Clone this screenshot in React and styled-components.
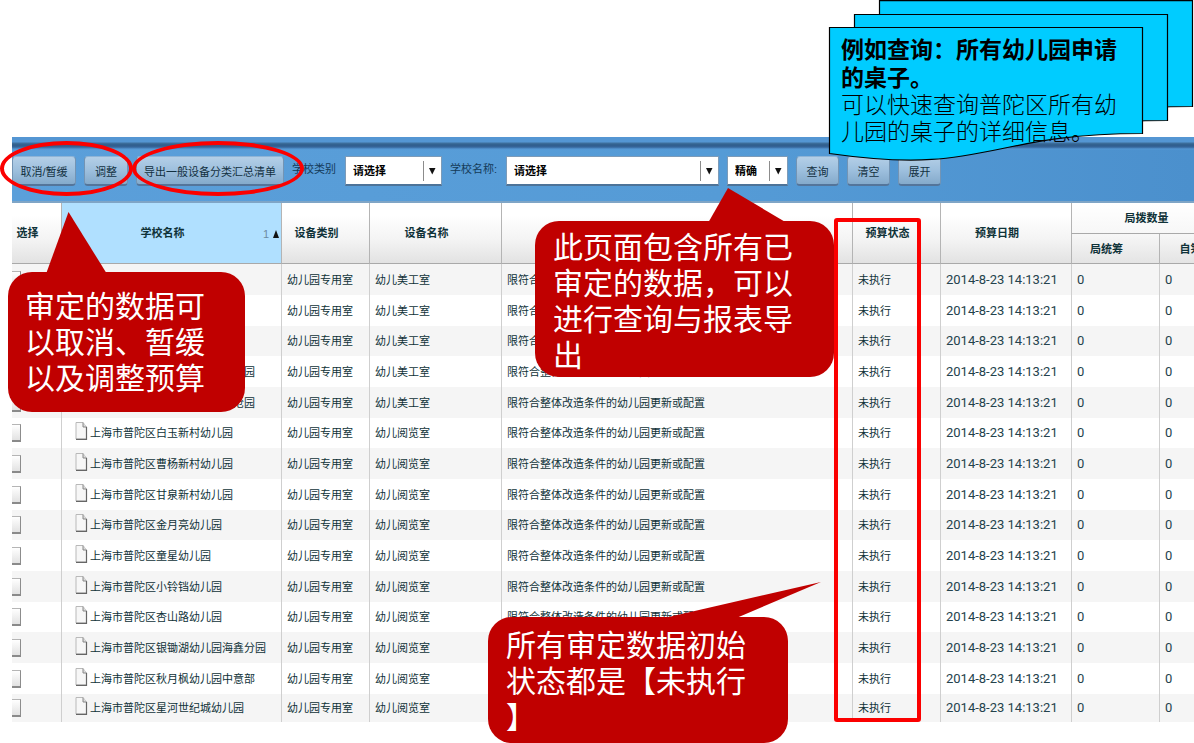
import React from "react";
import styled, { createGlobalStyle } from "styled-components";

const GlobalStyle = createGlobalStyle`
  *, *::before, *::after { box-sizing: border-box; }
  body {
    margin: 0;
    background: #fff;
    color: #0f3238;
    font-family: "Liberation Sans", "Noto Sans CJK SC", sans-serif;
    font-size: 11px;
  }
  button, select, input { font: inherit; color: inherit; }
`;

const Page = styled.div`
  position: relative;
  min-height: 100vh;
  overflow: hidden;
  padding: 137px 0 22px 12px;
`;

const Toolbar = styled.div`
  display: flex;
  gap: 8px;
  height: 66px;
  padding-top: 19px;
  border-bottom: 2px solid #7fa5c6;
  background:
    linear-gradient(#5496d3 0 5px, #3f719f 6px, #2f5d8b 8px, #36659a 10px, #5497d4 12px, transparent 13px),
    linear-gradient(90deg, #5b9fda, #559bd6 60%, #4b90cd);
`;

const ToolButton = styled.button`
  flex: none;
  width: ${(p) => p.$width}px;
  height: 30px;
  padding: 0;
  border: 1px solid #7394b4;
  border-top-color: #8fb4d6;
  border-bottom: 2px solid #54759a;
  border-radius: 4px;
  background: linear-gradient(#b4cfe7, #9dbfdd 50%, #84aacb);
  color: #12303f;
  white-space: nowrap;
`;

const FieldLabel = styled.label`
  flex: none;
  padding-right: 1px;
  line-height: 26px;
  color: #143a58;
  white-space: nowrap;
`;

const SelectBox = styled.div`
  position: relative;
  flex: none;
  width: ${(p) => p.$width}px;
  height: 30px;

  svg {
    position: absolute;
    right: 0;
    top: 0;
    pointer-events: none;
  }
`;

const Select = styled.select`
  appearance: none;
  width: 100%;
  height: 100%;
  padding: 0 20px 0 7px;
  border: 1px solid #7d9bb8;
  border-bottom: 2px solid #4d7398;
  border-radius: 0;
  background: #fff;
  color: #000;
  font-weight: 700;
`;

const TableFrame = styled.div`
  overflow: hidden;
`;

const Table = styled.table`
  width: calc(100% + 45px);
  table-layout: fixed;
  border-collapse: separate;
  border-spacing: 0;
`;

const HeadCell = styled.th`
  position: relative;
  height: ${(p) => (p.$half === "top" ? 31 : p.$half ? 30 : 61)}px;
  padding: 0 18px 0 0;
  border-left: ${(p) => (p.$first ? "0" : "1px solid #b4b4b4")};
  border-bottom: 1px solid #a9a9a9;
  background: ${(p) =>
    p.$sorted
      ? "#b0e0ff"
      : p.$half === "top"
      ? "linear-gradient(#fff, #f7f7f7)"
      : p.$half
      ? "linear-gradient(#f7f7f7, #e4e4e4)"
      : "linear-gradient(#fff 20%, #f4f4f4 60%, #e2e2e2)"};
  font-weight: 700;
  line-height: 16px;
  white-space: nowrap;
`;

const SortMark = styled.span`
  position: absolute;
  right: 2px;
  top: 23px;
  display: flex;
  align-items: center;
  gap: 4px;
  color: #6d8ba0;
  font-weight: 400;
`;

const Row = styled.tr`
  height: 31px;
  background: #fff;
  &:nth-child(odd) { background: #f5f5f5; }
  &:nth-child(3n) { height: 30px; }
  &:last-child { height: 28px; }
`;

const Cell = styled.td`
  padding: 0 0 0 5px;
  border-left: 1px solid #cfcfcf;
  line-height: 16px;
  white-space: nowrap;
`;

const PickCell = styled.td`
  padding: 0;
`;

const NumberCell = styled(Cell)`
  font-family: Roboto, sans-serif;
  font-size: 13px;
  color: #24424c;
`;

const NameCell = styled(Cell)`
  padding-left: 13px;
`;

const NameLine = styled.span`
  display: flex;
  align-items: center;
  gap: 2px;
`;

const Pick = styled.input`
  appearance: none;
  display: block;
  width: 18px;
  height: 18px;
  margin: 0 0 0 -9px;
  border: 1px solid #b5b5b5;
  border-right-color: #8c8c8c;
  border-bottom: 2px solid #8a8a8a;
  background: linear-gradient(#fff, #e2e2e2);
`;

const Overlay = styled.div`
  position: absolute;
  left: ${(p) => p.$x}px;
  top: ${(p) => p.$y}px;
  width: ${(p) => p.$w}px;
  height: ${(p) => p.$h}px;
`;

const Ring = styled(Overlay)`
  border: 4px solid #fb0000;
  border-radius: 50%;
  pointer-events: none;
`;

const Frame = styled(Overlay)`
  border: 4px solid #fb0000;
  border-radius: 3px;
  pointer-events: none;
`;

const Callout = styled(Overlay)`
  padding: ${(p) => p.$pad};
  border-radius: 24px;
  background: #c00000;
  color: #fff;
  font-family: "Noto Sans CJK SC", sans-serif;
  font-size: 30px;
  font-weight: 400;
  line-height: 36px;
  white-space: nowrap;
`;

const Pointers = styled.svg`
  position: absolute;
  left: 0;
  top: 0;
  pointer-events: none;
`;

const Note = styled(Overlay)`
  color: #000;
  font-family: "Noto Sans CJK SC", sans-serif;
  font-size: 23px;

  svg {
    position: absolute;
    left: 0;
    top: 0;
  }
`;

const NoteText = styled.div`
  position: relative;
  padding: 34px 0 0 13px;
  white-space: nowrap;

  strong {
    display: block;
    font-weight: 700;
    line-height: 28px;
  }
  p {
    margin: 0;
    font-weight: 300;
    line-height: 27px;
  }
`;

const ROOM_ART = "幼儿美工室";
const ROOM_READ = "幼儿阅览室";

const rows = [
  ["上海市普陀区白丽幼儿园", ROOM_ART],
  ["上海市普陀区宝山幼儿园", ROOM_ART],
  ["上海市普陀区汇丽幼儿园", ROOM_ART],
  ["上海市普陀区大风车幼儿园总分园", ROOM_ART],
  ["上海市普陀区小天使幼儿园部沧园", ROOM_ART],
  ["上海市普陀区白玉新村幼儿园", ROOM_READ],
  ["上海市普陀区曹杨新村幼儿园", ROOM_READ],
  ["上海市普陀区甘泉新村幼儿园", ROOM_READ],
  ["上海市普陀区金月亮幼儿园", ROOM_READ],
  ["上海市普陀区童星幼儿园", ROOM_READ],
  ["上海市普陀区小铃铛幼儿园", ROOM_READ],
  ["上海市普陀区杏山路幼儿园", ROOM_READ],
  ["上海市普陀区银锄湖幼儿园海鑫分园", ROOM_READ],
  ["上海市普陀区秋月枫幼儿园中意部", ROOM_READ],
  ["上海市普陀区星河世纪城幼儿园", ROOM_READ],
];

const columnWidths = [49, 220, 88, 132, null, 88, 131, 88, 80];

function DropDown({ id, label, width, value }) {
  return (
    <SelectBox $width={width}>
      <Select id={id} aria-label={label}>
        <option>{value}</option>
      </Select>
      <svg width="20" height="30" viewBox="0 0 20 30" aria-hidden="true">
        <path d="M1.5 5V25" stroke="#8c8c8c" />
        <path d="M7 12H13.500L10.250 18.500Z" fill="#111" />
      </svg>
    </SelectBox>
  );
}

function PageIcon() {
  return (
    <svg width="13" height="24" viewBox="0 0 13 24" aria-hidden="true">
      <path d="M1 1.500H8L11.500 6V18H1Z" fill="#f7f7f7" stroke="#b9b9b9" />
      <path d="M8 1.500V6H11.500" fill="#ddd" stroke="#888" />
      <path d="M11.500 6V18.300H1" fill="none" stroke="#666" strokeWidth="1.200" />
    </svg>
  );
}

const sheetPath = "V133.5 C986 133.5 986 176 829.5 153.5 Z";

export default function App() {
  return (
    <>
      <GlobalStyle />
      <Page>
        <Toolbar>
          <ToolButton type="button" $width={64}>取消/暂缓</ToolButton>
          <ToolButton type="button" $width={44}>调整</ToolButton>
          <ToolButton type="button" $width={148}>导出一般设备分类汇总清单</ToolButton>
          <FieldLabel htmlFor="school-type">学校类别</FieldLabel>
          <DropDown id="school-type" width={97} value="请选择" />
          <FieldLabel htmlFor="school-name">学校名称:</FieldLabel>
          <DropDown id="school-name" width={213} value="请选择" />
          <DropDown id="match-mode" label="匹配方式" width={61} value="精确" />
          <ToolButton type="button" $width={43}>查询</ToolButton>
          <ToolButton type="button" $width={43}>清空</ToolButton>
          <ToolButton type="button" $width={43}>展开</ToolButton>
        </Toolbar>

        <TableFrame>
          <Table>
            <colgroup>
              {columnWidths.map((w, i) => (
                <col key={i} width={w || undefined} />
              ))}
            </colgroup>
            <thead>
              <tr>
                <HeadCell rowSpan={2} $first>选择</HeadCell>
                <HeadCell rowSpan={2} $sorted>
                  学校名称
                  <SortMark>
                    1
                    <svg width="6" height="8" viewBox="0 0 6 8" aria-hidden="true">
                      <path d="M3 0L6 8H0Z" fill="#111" />
                    </svg>
                  </SortMark>
                </HeadCell>
                <HeadCell rowSpan={2}>设备类别</HeadCell>
                <HeadCell rowSpan={2}>设备名称</HeadCell>
                <HeadCell rowSpan={2} />
                <HeadCell rowSpan={2}>预算状态</HeadCell>
                <HeadCell rowSpan={2}>预算日期</HeadCell>
                <HeadCell colSpan={2} $half="top">局拨数量</HeadCell>
              </tr>
              <tr>
                <HeadCell $half="bottom">局统筹</HeadCell>
                <HeadCell $half="bottom">自筹</HeadCell>
              </tr>
            </thead>
            <tbody>
              {rows.map(([name, room]) => (
                <Row key={name}>
                  <PickCell>
                    <Pick type="checkbox" aria-label={name} />
                  </PickCell>
                  <NameCell>
                    <NameLine>
                      <PageIcon />
                      {name}
                    </NameLine>
                  </NameCell>
                  <Cell>幼儿园专用室</Cell>
                  <Cell>{room}</Cell>
                  <Cell>限符合整体改造条件的幼儿园更新或配置</Cell>
                  <Cell>未执行</Cell>
                  <NumberCell>2014-8-23 14:13:21</NumberCell>
                  <NumberCell>0</NumberCell>
                  <NumberCell>0</NumberCell>
                </Row>
              ))}
            </tbody>
          </Table>
        </TableFrame>

        <Pointers width="900" height="743" viewBox="0 0 900 743" fill="#c00000" aria-hidden="true">
          <path d="M68.500 212L46 274H107Z" />
          <path d="M728 188L708 223H787Z" />
          <path d="M821 582L660 619H734Z" />
        </Pointers>
        <Ring $x={0} $y={141} $w={133} $h={55} />
        <Ring $x={132} $y={141} $w={172} $h={55} />

        <Callout $x={8} $y={272} $w={237} $h={140} $pad="14px 17px">
          审定的数据可<br />以取消、暂缓<br />以及调整预算
        </Callout>
        <Callout $x={535} $y={221} $w={299} $h={156} $pad="6px 18px">
          此页面包含所有已<br />审定的数据，可以<br />进行查询与报表导<br />出
        </Callout>
        <Callout $x={488} $y={617} $w={300} $h={126} $pad="8px 18px">
          所有审定数据初始<br />状态都是【未执行<br />】
        </Callout>
        <Frame $x={834} $y={218} $w={87} $h={504} />

        <Note $x={828} $y={0} $w={366} $h={162}>
          <svg width="366" height="162" viewBox="828 0 366 162" fill="#00ccff" stroke="#000" strokeWidth="1.200" aria-hidden="true">
            <path transform="translate(50 -27)" d={"M829.5 27.7H1142.5" + sheetPath} />
            <path transform="translate(25 -13)" d={"M829.5 27.5H1142.5" + sheetPath} />
            <path d={"M829.5 27.5H1142.5" + sheetPath} />
          </svg>
          <NoteText>
            <strong>例如查询：所有幼儿园申请<br />的桌子。</strong>
            <p>可以快速查询普陀区所有幼<br />儿园的桌子的详细信息。</p>
          </NoteText>
        </Note>
      </Page>
    </>
  );
}
